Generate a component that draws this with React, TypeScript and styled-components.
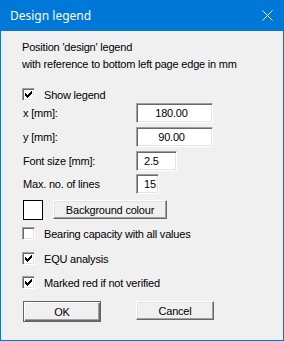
import styled, { createGlobalStyle } from 'styled-components'

const GlobalStyle = createGlobalStyle`
  html, body {
    margin: 0;
    padding: 0;
    background: #f0f0f0;
  }
  body {
    font-family: 'Liberation Sans', Arial, sans-serif;
    font-size: 11px;
    letter-spacing: -0.2px;
    color: #000;
  }
`

const Window = styled.div`
  width: 284px;
  height: 341px;
  box-sizing: border-box;
  border: 1px solid #0078d7;
  border-top: none;
  background: #f0f0f0;
  display: flex;
  flex-direction: column;
`

const TitleBar = styled.div`
  height: 31px;
  margin: 0 -1px;
  background: #0078d7;
  display: flex;
  align-items: center;
  justify-content: space-between;
  padding: 0 10px 0 10px;
  color: #fff;
  font-family: 'Noto Sans', 'Open Sans', sans-serif;
  font-size: 12px;
  letter-spacing: 0;
`

const Title = styled.span`
  margin-top: -1px;
`

const CloseIcon = () => (
  <svg width="11" height="11" viewBox="0 0 11 11" style={{ marginRight: 1 }}>
    <path d="M0.5 0.5 L10.5 10.5 M10.5 0.5 L0.5 10.5" stroke="#fff" strokeWidth="1" />
  </svg>
)

const Body = styled.div`
  display: flex;
  flex-direction: column;
  padding: 8px 0 0 21px;
`

const Intro = styled.p`
  margin: 0;
  line-height: 17px;
`

const CheckRow = styled.label<{ $top: number }>`
  display: flex;
  align-items: center;
  height: 13px;
  margin-top: ${(p) => p.$top}px;
  gap: 9px;
`

const Box = styled.span`
  width: 13px;
  height: 13px;
  box-sizing: border-box;
  background: #fff;
  border: 1px solid;
  border-color: #a0a0a0 #fff #fff #a0a0a0;
  box-shadow: inset 1px 1px 0 #696969, inset -1px -1px 0 #e3e3e3;
  display: flex;
  align-items: center;
  justify-content: center;
`

const Checkbox = ({ checked }: { checked: boolean }) => (
  <Box>
    {checked && (
      <svg width="7" height="7" viewBox="0 0 7 7">
        <path d="M0 2h1v1h1v1h1v-1h1v-1h1v-1h1v-1h1v3h-1v1h-1v1h-1v1h-1v1h-1v-1h-1v-1h-1z" fill="#000" />
      </svg>
    )}
  </Box>
)

const FieldRow = styled.div<{ $top: number }>`
  display: grid;
  grid-template-columns: 113px auto;
  align-items: center;
  height: 20px;
  margin-top: ${(p) => p.$top}px;
  padding-left: 1px;
`

const Input = styled.div<{ $width: number }>`
  width: ${(p) => p.$width}px;
  height: 20px;
  box-sizing: border-box;
  background: #fff;
  border: 1px solid;
  border-color: #a0a0a0 #fff #fff #a0a0a0;
  box-shadow: inset 1px 1px 0 #696969, inset -1px -1px 0 #e3e3e3;
  display: flex;
  align-items: center;
  justify-content: center;
  padding-right: 6px;
`

const LeftInput = styled(Input)`
  justify-content: flex-start;
  padding: 0 0 0 7px;
`

const ColourRow = styled.div`
  display: flex;
  align-items: flex-start;
  gap: 10px;
  margin-top: 6px;
  padding-left: 1px;
`

const Swatch = styled.div`
  width: 20px;
  height: 20px;
  box-sizing: border-box;
  border: 1px solid #000;
  background: #fff;
`

const Button = styled.div<{ $width: number; $default?: boolean }>`
  width: ${(p) => p.$width}px;
  height: ${(p) => (p.$default ? 21 : 19)}px;
  box-sizing: border-box;
  background: #f0f0f0;
  display: flex;
  align-items: center;
  justify-content: center;
  border: 1px solid;
  border-color: ${(p) => (p.$default ? '#646464' : '#fff #696969 #696969 #fff')};
  box-shadow: ${(p) =>
    p.$default
      ? 'inset 1px 1px 0 #fff, inset -1px -1px 0 #696969, inset -2px -2px 0 #a0a0a0'
      : 'inset -1px -1px 0 #a0a0a0, inset 1px 1px 0 #e3e3e3'};
`

const ButtonRow = styled.div`
  display: flex;
  gap: 35px;
  margin-top: 12px;
  padding-left: 1px;
`

export default function App() {
  return (
    <>
      <GlobalStyle />
      <Window>
        <TitleBar>
          <Title>Design legend</Title>
          <CloseIcon />
        </TitleBar>
        <Body>
          <Intro>
            Position 'design' legend
            <br />
            with reference to bottom left page edge in mm
          </Intro>
          <CheckRow $top={15}>
            <Checkbox checked />
            Show legend
          </CheckRow>
          <FieldRow $top={2}>
            <span>x [mm]:</span>
            <Input $width={77}>180.00</Input>
          </FieldRow>
          <FieldRow $top={4}>
            <span>y [mm]:</span>
            <Input $width={77}>90.00</Input>
          </FieldRow>
          <FieldRow $top={4}>
            <span>Font size [mm]:</span>
            <LeftInput $width={41}>2.5</LeftInput>
          </FieldRow>
          <FieldRow $top={3}>
            <span>Max. no. of lines</span>
            <LeftInput $width={23}>15</LeftInput>
          </FieldRow>
          <ColourRow>
            <Swatch />
            <Button $width={114}>Background colour</Button>
          </ColourRow>
          <CheckRow $top={7}>
            <Checkbox checked={false} />
            Bearing capacity with all values
          </CheckRow>
          <CheckRow $top={12}>
            <Checkbox checked />
            EQU analysis
          </CheckRow>
          <CheckRow $top={11}>
            <Checkbox checked />
            Marked red if not verified
          </CheckRow>
          <ButtonRow>
            <Button $width={78} $default>
              OK
            </Button>
            <Button $width={78}>Cancel</Button>
          </ButtonRow>
        </Body>
      </Window>
    </>
  )
}
